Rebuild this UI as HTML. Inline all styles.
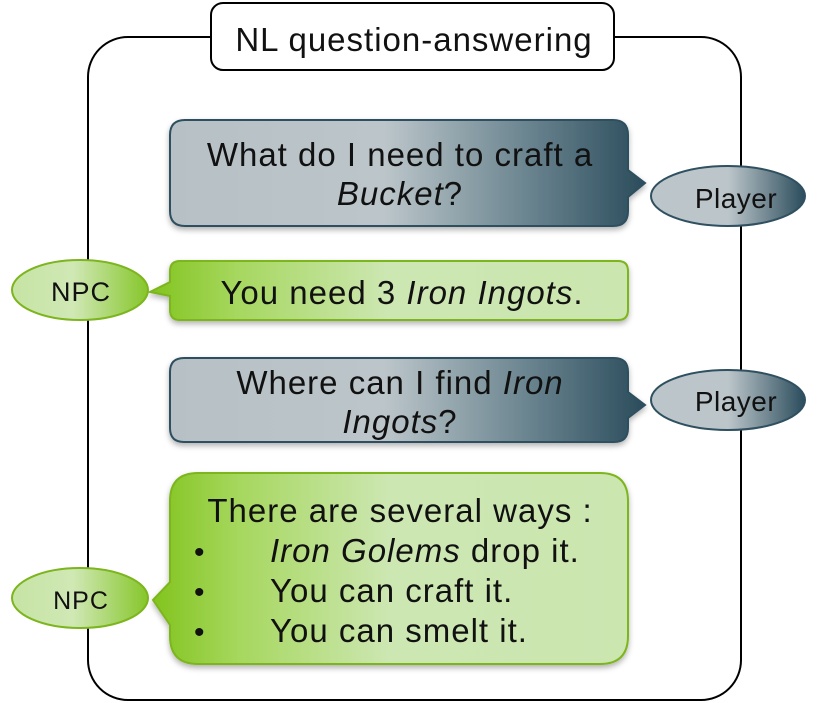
<!DOCTYPE html>
<html><head><meta charset="utf-8"><style>
html,body{margin:0;padding:0;background:#fff;}
svg{display:block}
text{font-family:"Liberation Sans",sans-serif;fill:#111;}
.m{font-size:33px;letter-spacing:1px}
</style></head><body>
<svg width="832" height="703" viewBox="0 0 832 703" xmlns="http://www.w3.org/2000/svg">
<defs>
<linearGradient id="gb" x1="0" x2="1" y1="0" y2="0">
<stop offset="0" stop-color="#b7c1c5"/><stop offset="0.45" stop-color="#bcc6ca"/><stop offset="0.75" stop-color="#6b8590"/><stop offset="1" stop-color="#2b4c5c"/></linearGradient>
<linearGradient id="gg" x1="0" x2="1" y1="0" y2="0">
<stop offset="0" stop-color="#82c41e"/><stop offset="0.18" stop-color="#a6d75e"/><stop offset="0.5" stop-color="#cde7b3"/><stop offset="1" stop-color="#cbe6af"/></linearGradient>
<linearGradient id="ge" x1="0" x2="1"><stop offset="0" stop-color="#bcc6ca"/><stop offset="0.5" stop-color="#bcc6ca"/><stop offset="1" stop-color="#2b4c5c"/></linearGradient>
<linearGradient id="gn" x1="0" x2="1"><stop offset="0" stop-color="#c6e4a4"/><stop offset="0.45" stop-color="#d0e8b5"/><stop offset="1" stop-color="#86c62a"/></linearGradient>
<filter id="sh" x="-10%" y="-10%" width="120%" height="130%"><feDropShadow dx="0" dy="3" stdDeviation="3" flood-color="#000" flood-opacity="0.3"/></filter>
</defs>
<rect x="88" y="37" width="653" height="663" rx="40" fill="none" stroke="#000" stroke-width="2"/>
<rect x="211" y="3" width="403" height="67" rx="12" fill="#fff" stroke="#000" stroke-width="2"/>
<text x="414" y="51" font-size="33" letter-spacing="1" text-anchor="middle">NL question-answering</text>

<path filter="url(#sh)" d="M185 120 H613 Q628 120 628 135 V170 L645 183 L628 197 V211 Q628 226 613 226 H185 Q170 226 170 211 V135 Q170 120 185 120Z" fill="url(#gb)" stroke="#2f5060" stroke-width="2"/>
<text class="m" x="400" y="166" text-anchor="middle">What do I need to craft a</text>
<text class="m" x="400" y="205" text-anchor="middle"><tspan font-style="italic">Bucket</tspan>?</text>
<ellipse cx="728" cy="196" rx="77" ry="30" fill="url(#ge)" stroke="#2f5060" stroke-width="2"/>
<text x="736" y="208" font-size="28" letter-spacing="0.5" text-anchor="middle">Player</text>

<path filter="url(#sh)" d="M180 261 H618 Q628 261 628 271 V310 Q628 320 618 320 H180 Q170 320 170 310 V296 L150 292 L170 282 V271 Q170 261 180 261Z" fill="url(#gg)" stroke="#7cb51e" stroke-width="2"/>
<text class="m" x="402" y="304" text-anchor="middle">You need 3 <tspan font-style="italic">Iron Ingots</tspan>.</text>
<ellipse cx="80" cy="290" rx="68" ry="30" fill="url(#gn)" stroke="#7cb51e" stroke-width="2"/>
<text x="81" y="301" font-size="27" letter-spacing="1" text-anchor="middle">NPC</text>

<path filter="url(#sh)" d="M184 358 H614 Q628 358 628 372 V392 L645 405 L628 418 V428 Q628 442 614 442 H184 Q170 442 170 428 V372 Q170 358 184 358Z" fill="url(#gb)" stroke="#2f5060" stroke-width="2"/>
<text class="m" x="400" y="394" text-anchor="middle">Where can I find <tspan font-style="italic">Iron</tspan></text>
<text class="m" x="400" y="433" text-anchor="middle"><tspan font-style="italic">Ingots</tspan>?</text>
<ellipse cx="728" cy="400" rx="77" ry="30" fill="url(#ge)" stroke="#2f5060" stroke-width="2"/>
<text x="736" y="411" font-size="28" letter-spacing="0.5" text-anchor="middle">Player</text>

<path filter="url(#sh)" d="M198 473 H600 Q628 473 628 501 V636 Q628 664 600 664 H198 Q170 664 170 636 V625 L153 600 L170 582 V501 Q170 473 198 473Z" fill="url(#gg)" stroke="#7cb51e" stroke-width="2"/>
<text class="m" x="400" y="522" text-anchor="middle">There are several ways :</text>
<text x="194" y="562" font-size="30">•</text>
<text x="194" y="602" font-size="30">•</text>
<text x="194" y="642" font-size="30">•</text>
<text class="m" x="270" y="562"><tspan font-style="italic">Iron Golems</tspan> drop it.</text>
<text class="m" x="270" y="602">You can craft it.</text>
<text class="m" x="270" y="642">You can smelt it.</text>
<ellipse cx="80" cy="598" rx="68" ry="30" fill="url(#gn)" stroke="#7cb51e" stroke-width="2"/>
<text x="81" y="609" font-size="25" letter-spacing="1" text-anchor="middle">NPC</text>
</svg>
</body></html>
